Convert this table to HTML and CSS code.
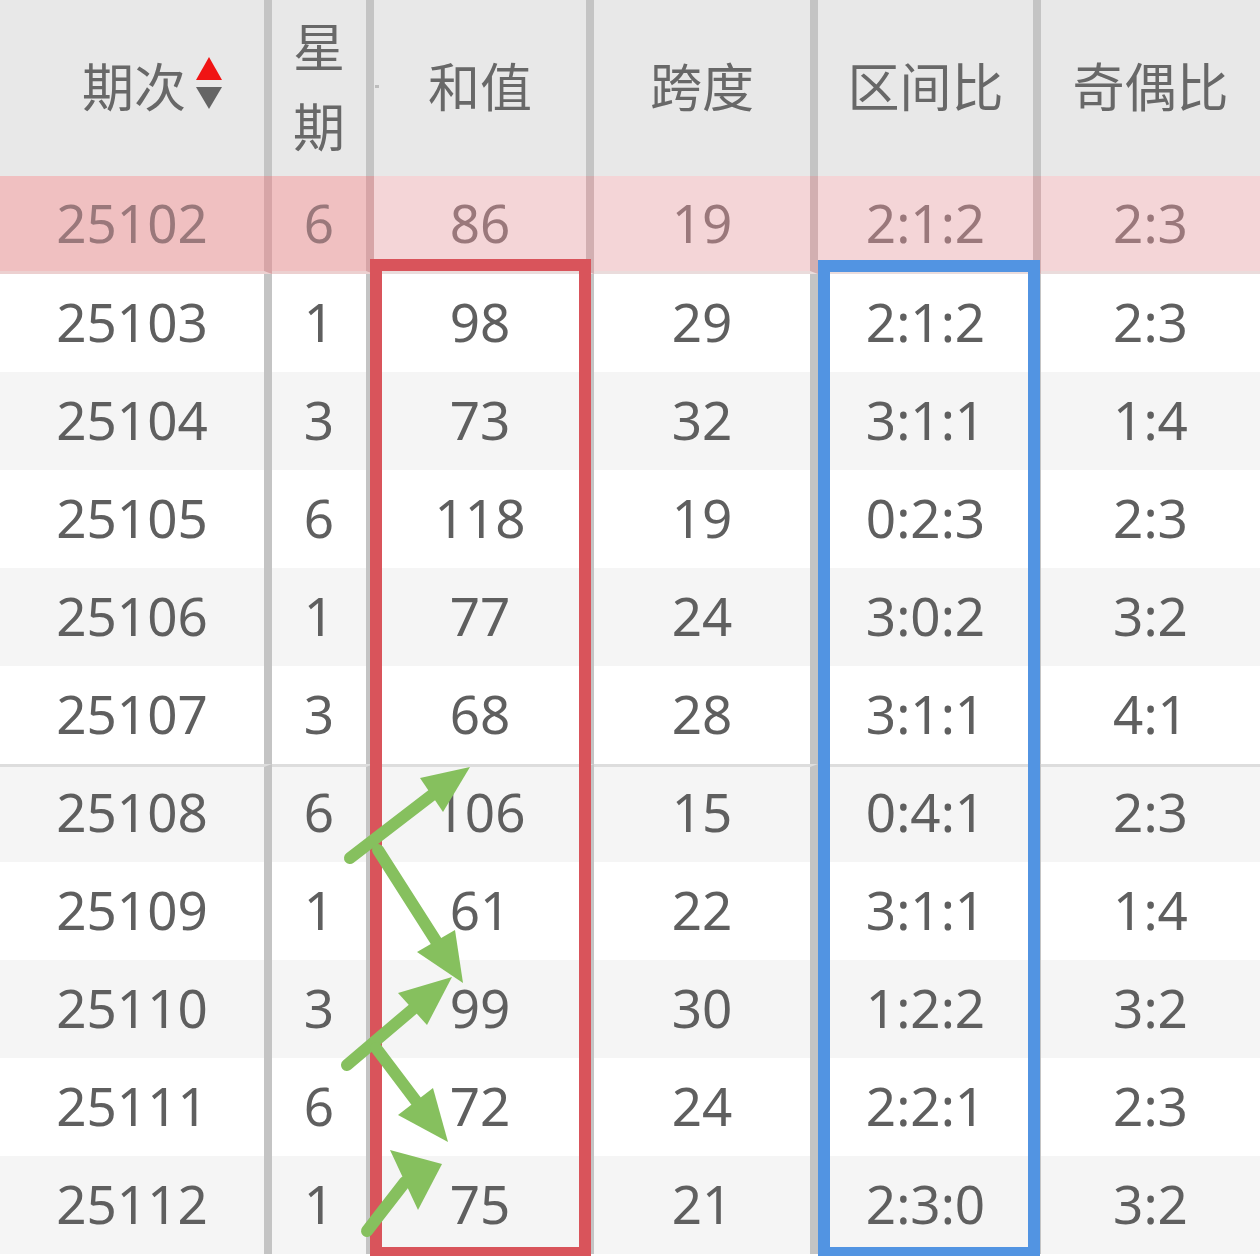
FILE: index.html
```html
<!DOCTYPE html>
<html lang="zh-CN">
<head>
<meta charset="utf-8">
<title>走势表</title>
<link rel="stylesheet" href="styles.css">
</head>
<body>
<div class="page">
  <div class="table">
    <div class="row head">
      <div class="cell"><span class="sort-label">期次<svg class="sort-icon" width="26" height="52" viewBox="0 0 26 52"><polygon points="13,0 26,23 0,23" fill="#f01414"/><polygon points="0,30 26,30 13,52" fill="#646464"/></svg></span></div>
      <div class="cell vertical">星<br>期</div>
      <div class="cell tick">和值</div>
      <div class="cell">跨度</div>
      <div class="cell">区间比</div>
      <div class="cell">奇偶比</div>
    </div>
    <div class="row current">
      <div class="cell dark">25102</div><div class="cell dark">6</div><div class="cell">86</div><div class="cell">19</div><div class="cell">2:1:2</div><div class="cell">2:3</div>
    </div>
    <div class="row">
      <div class="cell">25103</div><div class="cell">1</div><div class="cell">98</div><div class="cell">29</div><div class="cell">2:1:2</div><div class="cell">2:3</div>
    </div>
    <div class="row alt">
      <div class="cell">25104</div><div class="cell">3</div><div class="cell">73</div><div class="cell">32</div><div class="cell">3:1:1</div><div class="cell">1:4</div>
    </div>
    <div class="row">
      <div class="cell">25105</div><div class="cell">6</div><div class="cell">118</div><div class="cell">19</div><div class="cell">0:2:3</div><div class="cell">2:3</div>
    </div>
    <div class="row alt">
      <div class="cell">25106</div><div class="cell">1</div><div class="cell">77</div><div class="cell">24</div><div class="cell">3:0:2</div><div class="cell">3:2</div>
    </div>
    <div class="row">
      <div class="cell">25107</div><div class="cell">3</div><div class="cell">68</div><div class="cell">28</div><div class="cell">3:1:1</div><div class="cell">4:1</div>
    </div>
    <div class="row alt divided">
      <div class="cell">25108</div><div class="cell">6</div><div class="cell">106</div><div class="cell">15</div><div class="cell">0:4:1</div><div class="cell">2:3</div>
    </div>
    <div class="row">
      <div class="cell">25109</div><div class="cell">1</div><div class="cell">61</div><div class="cell">22</div><div class="cell">3:1:1</div><div class="cell">1:4</div>
    </div>
    <div class="row alt">
      <div class="cell">25110</div><div class="cell">3</div><div class="cell">99</div><div class="cell">30</div><div class="cell">1:2:2</div><div class="cell">3:2</div>
    </div>
    <div class="row">
      <div class="cell">25111</div><div class="cell">6</div><div class="cell">72</div><div class="cell">24</div><div class="cell">2:2:1</div><div class="cell">2:3</div>
    </div>
    <div class="row alt">
      <div class="cell">25112</div><div class="cell">1</div><div class="cell">75</div><div class="cell">21</div><div class="cell">2:3:0</div><div class="cell">3:2</div>
    </div>
  </div>

  <svg class="overlay" width="1260" height="1256" viewBox="0 0 1260 1256">
    <rect x="376" y="265" width="209" height="988" fill="none" stroke="#d9545b" stroke-width="12"/>
    <rect x="824" y="266" width="210" height="987" fill="none" stroke="#5294e2" stroke-width="12"/>
    <g stroke="#86c05e" stroke-width="12" stroke-linecap="round" fill="#86c05e">
      <line x1="350" y1="858" x2="432" y2="795"/>
      <polygon points="470,767 420,778 443,812" stroke="none"/>
      <line x1="378" y1="850" x2="436" y2="941"/>
      <polygon points="463,983 417,952 455,930" stroke="none"/>
      <line x1="347" y1="1065" x2="413" y2="1009"/>
      <polygon points="452,977 398,993 427,1025" stroke="none"/>
      <line x1="376" y1="1048" x2="416" y2="1101"/>
      <polygon points="448,1142 398,1115 433,1088" stroke="none"/>
      <line x1="367" y1="1231" x2="405" y2="1182"/>
      <polygon points="442,1164 390,1150 418,1210" stroke="none"/>
    </g>
  </svg>
</div>
</body>
</html>
```

FILE: styles.css
```css
* {
  box-sizing: border-box;
}

html, body {
  margin: 0;
  padding: 0;
  background: #ffffff;
}

body {
  width: 1260px;
  height: 1256px;
  overflow: hidden;
  font-family: "Noto Sans", "Noto Sans CJK SC", sans-serif;
}

.page {
  position: relative;
  width: 1260px;
  height: 1256px;
  overflow: hidden;
}

.table {
  display: flex;
  flex-direction: column;
}

.row {
  display: grid;
  grid-template-columns: 272px 102px 220px 224px 223px 219px;
  height: 98px;
  background: #ffffff;
  color: #5f5f5f;
  font-size: 53px;
}

.row.alt {
  background: #f5f5f5;
}

.cell {
  display: flex;
  align-items: center;
  justify-content: center;
  border-right: 8px solid #c4c4c4;
  line-height: 1;
  padding-bottom: 4px;
}

.cell:last-child {
  border-right: none;
}

.row.divided .cell {
  border-top: 3px solid #dddddd;
  padding-bottom: 6px;
}

/* header */
.row.head {
  height: 176px;
  background: #e8e8e8;
  color: #686868;
  font-size: 52px;
  font-family: "Noto Sans CJK SC", sans-serif;
}

.head .cell {
  position: relative;
  padding-bottom: 6px;
}

.sort-label {
  position: relative;
  display: inline-block;
  line-height: 1;
  padding-left: 4px;
}

.sort-icon {
  position: absolute;
  left: calc(100% + 10px);
  top: -2px;
}

.head .vertical {
  line-height: 80px;
  text-align: center;
  padding-bottom: 7px;
}

.head .tick::before {
  content: "";
  position: absolute;
  left: 1px;
  top: 85px;
  width: 4px;
  height: 3px;
  background: #bdbdbd;
}

/* highlighted current row */
.row.current {
  background: #f4d5d7;
  color: #9a787b;
}

.row.current .cell {
  border-right-color: #d2afb1;
  border-bottom: 3px solid #eadcdc;
  padding-bottom: 2px;
}

.row.current .cell:last-child {
  border-right: none;
}

.row.current .cell.dark {
  background: #f0c0c1;
  border-right-color: #d7a5a7;
  border-bottom-color: #ecd0d0;
}

.overlay {
  position: absolute;
  left: 0;
  top: 0;
  pointer-events: none;
}
```
